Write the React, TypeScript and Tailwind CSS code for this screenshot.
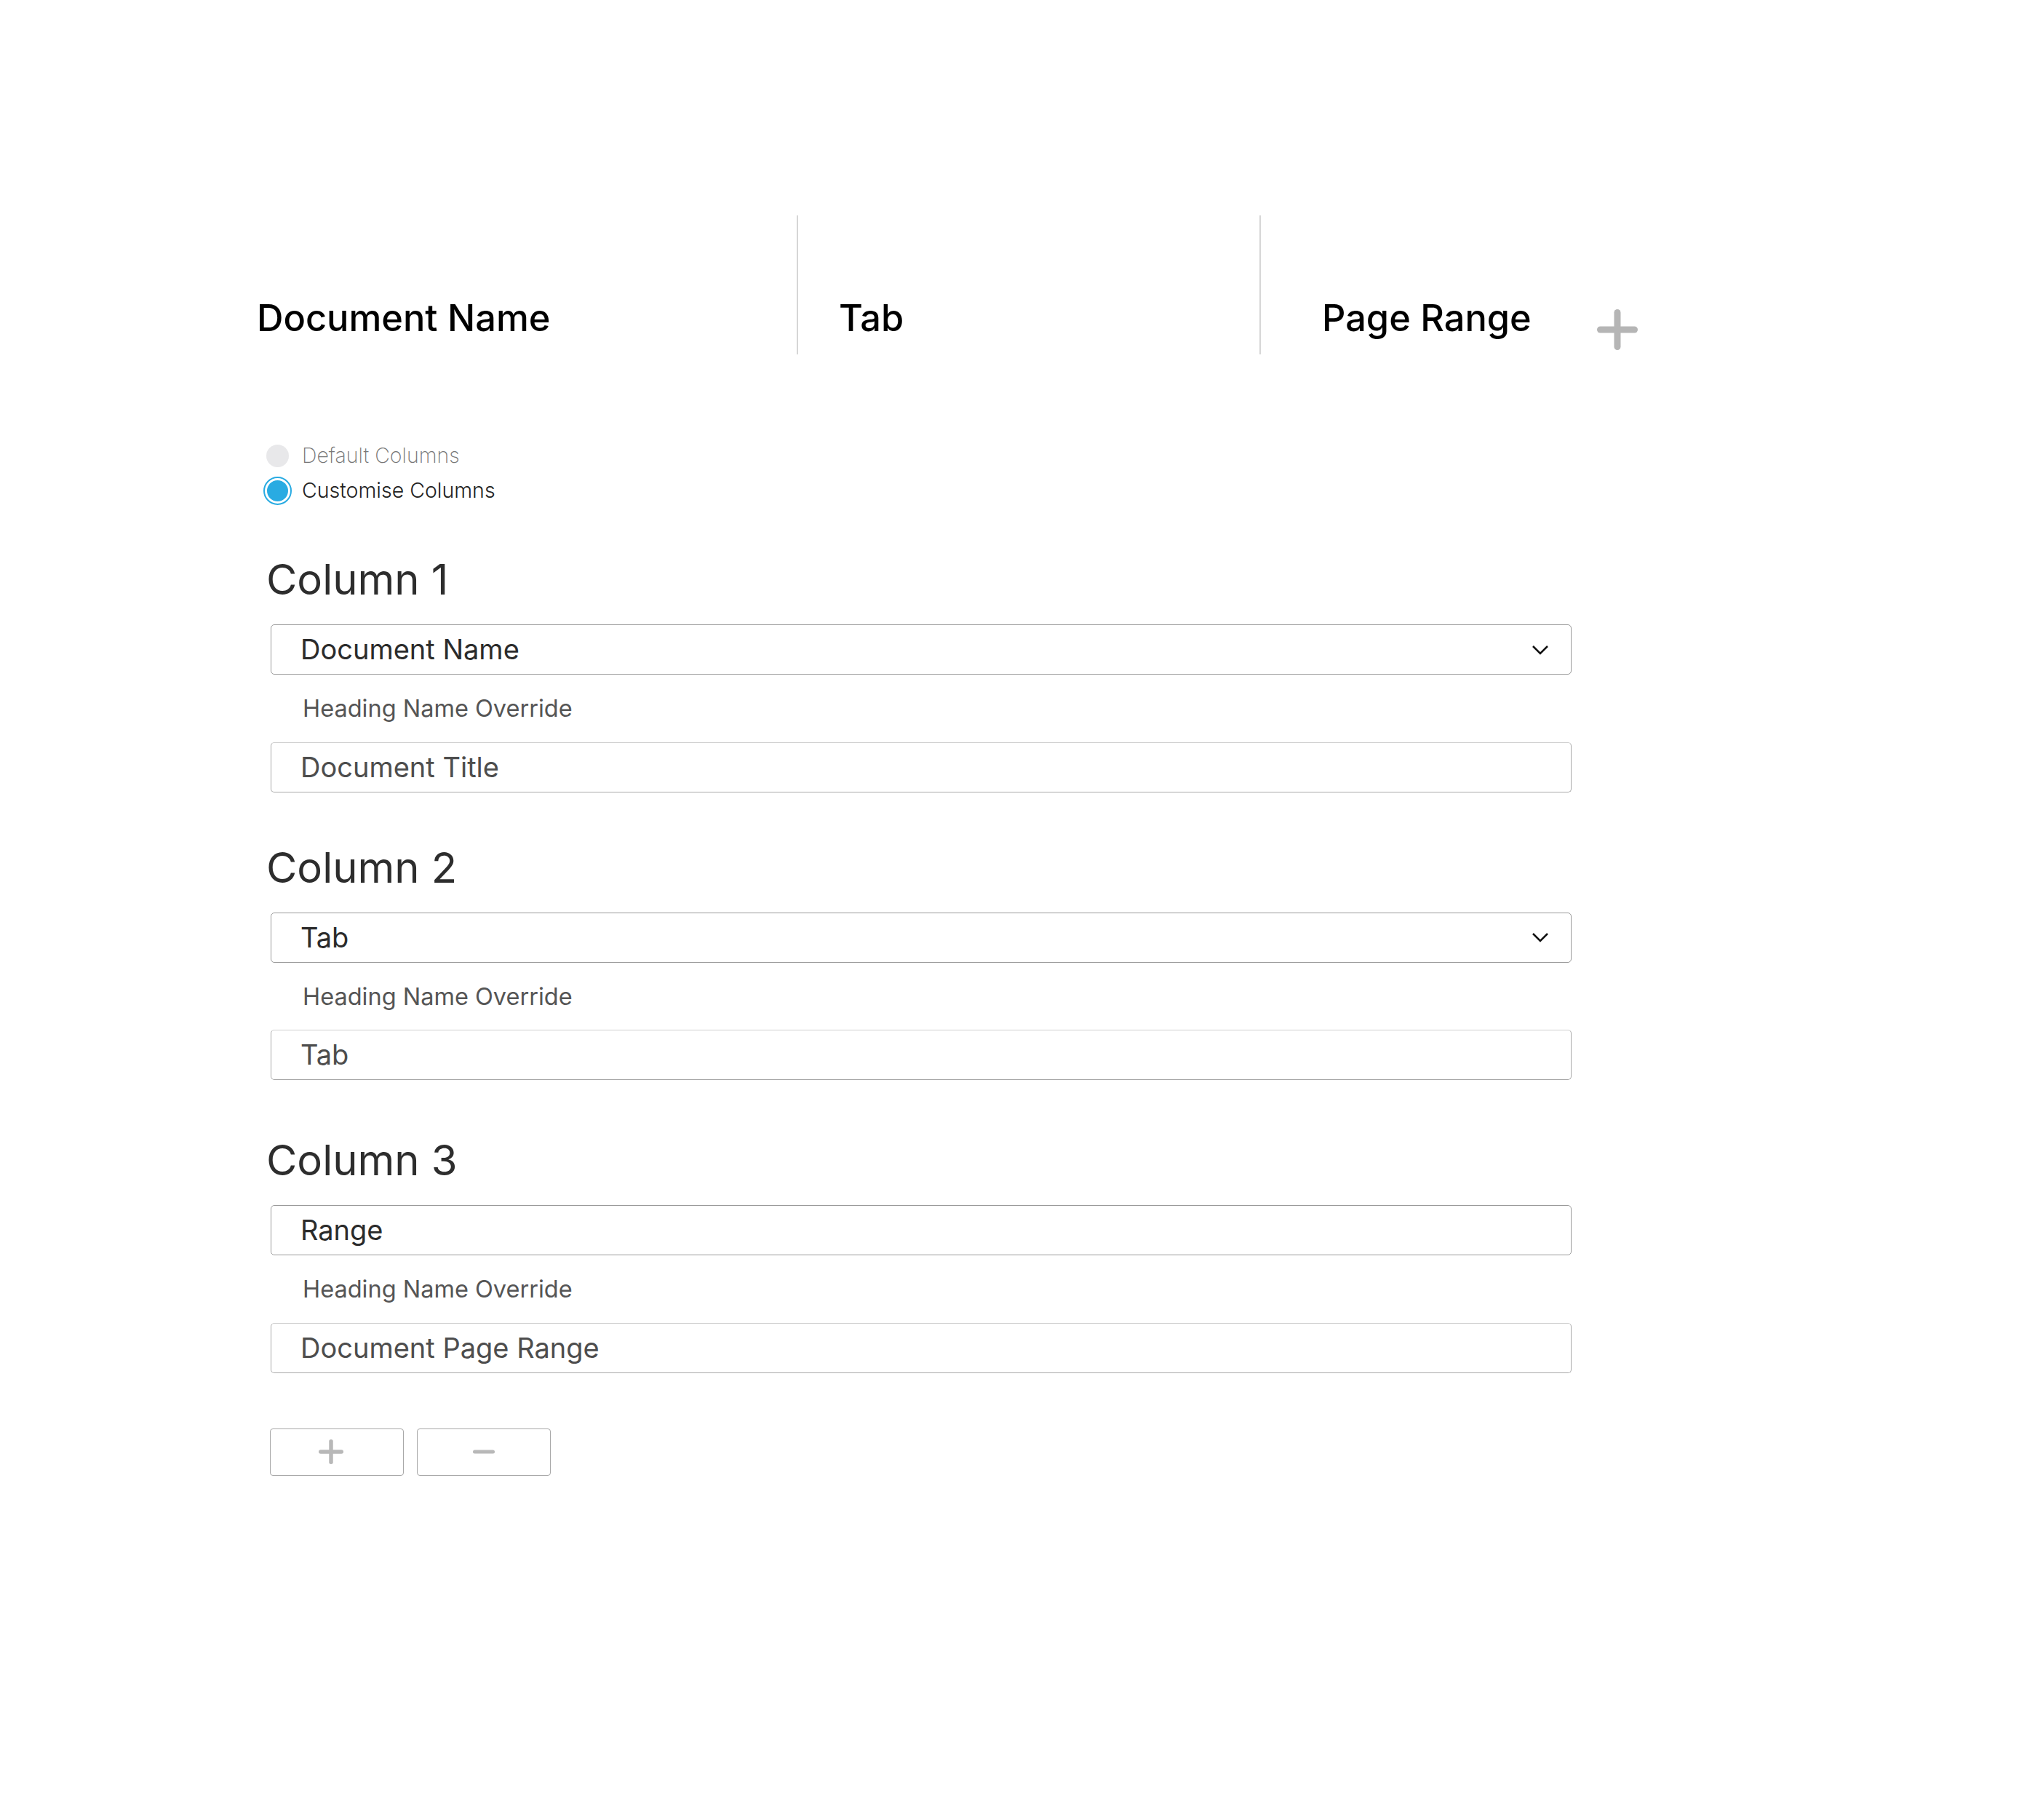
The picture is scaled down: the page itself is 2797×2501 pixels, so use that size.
import React from "react";

type ColumnProps = {
  title: string;
  value: string;
  override: string;
  select?: boolean;
  top: string;
};

function Chevron() {
  return (
    <svg width="24" height="14" viewBox="0 0 24 14" className="mr-[30px]">
      <polyline points="2,2 12,12 22,2" fill="none" stroke="#111" strokeWidth="2.5" />
    </svg>
  );
}

function Plus({ size, stroke, color }: { size: number; stroke: number; color: string }) {
  const h = stroke / 2;
  return (
    <svg width={size} height={size} viewBox={`0 0 ${size} ${size}`}>
      <line x1={h} y1={size / 2} x2={size - h} y2={size / 2} stroke={color} strokeWidth={stroke} strokeLinecap="round" />
      <line x1={size / 2} y1={h} x2={size / 2} y2={size - h} stroke={color} strokeWidth={stroke} strokeLinecap="round" />
    </svg>
  );
}

function ColumnSection({ title, value, override, select, top }: ColumnProps) {
  return (
    <div className={top}>
      <h2 className="ml-[13px] mb-[33px] text-[58px] leading-none font-normal text-[#2d2d2d]">{title}</h2>

      <div className="ml-[19px] w-[1788px] h-[69px] rounded-[5px] border border-[#9a9a9a] flex items-center justify-between pl-[40px] text-[38px] text-[#2b2b2b]">
        <span>{value}</span>
        {select && <Chevron />}
      </div>

      <p className="ml-[63px] mt-[31px] mb-[29px] text-[32.5px] leading-none text-[#555555]">Heading Name Override</p>

      <div className="ml-[19px] w-[1788px] h-[69px] rounded-[5px] border border-[#a9a9a9] border-t-[#cfcfcf] flex items-center pl-[40px] text-[38px] text-[#4d4d4d]">
        {override}
      </div>
    </div>
  );
}

export default function App() {
  return (
    <div className="min-h-screen bg-white font-['Inter',sans-serif]">
      <div className="pl-[353px] pt-[296px] pb-[400px]">
        {/* Table header preview */}
        <div className="flex h-[191px] text-[50.5px] leading-none font-medium text-black">
          <div className="w-[742px] pt-[116px]">Document Name</div>
          <div className="w-[2px] bg-[#d6d6d6]" />
          <div className="w-[634px] pl-[56px] pt-[116px]">Tab</div>
          <div className="w-[2px] bg-[#d6d6d6]" />
          <div className="flex items-start pl-[84px] pt-[116px]">
            <span>Page Range</span>
            <div className="ml-[90px] mt-[13px]">
              <Plus size={56} stroke={9} color="#b5b5b5" />
            </div>
          </div>
        </div>

        {/* Column mode */}
        <div className="mt-[115px] ml-[8px] flex flex-col">
          <label className="flex items-center h-[48px]">
            <span className="w-[40px] flex justify-center">
              <span className="w-[31px] h-[31px] rounded-full bg-[#e8e8ea]" />
            </span>
            <span className="ml-[14px] text-[28.5px] leading-none font-extralight text-[#777777]">Default Columns</span>
          </label>
          <label className="flex items-center h-[48px]">
            <span className="w-[40px] flex justify-center">
              <span className="w-[39px] h-[39px] rounded-full border-2 border-[#29abe2] p-[3px] bg-white">
                <span className="block w-full h-full rounded-full bg-[#29abe2]" />
              </span>
            </span>
            <span className="ml-[14px] text-[28.5px] leading-none font-light text-[#222222]">Customise Columns</span>
          </label>
        </div>

        <ColumnSection top="mt-[69px]" title="Column 1" value="Document Name" override="Document Title" select />
        <ColumnSection top="mt-[74px]" title="Column 2" value="Tab" override="Tab" select />
        <ColumnSection top="mt-[81px]" title="Column 3" value="Range" override="Document Page Range" />

        <div className="mt-[76px] ml-[18px] flex gap-[18px]">
          <button className="w-[184px] h-[65px] rounded-[4px] border border-[#a8a8a8] flex items-center justify-center pr-[16px]">
            <Plus size={34} stroke={5.5} color="#b8b8b8" />
          </button>
          <button className="w-[184px] h-[65px] rounded-[4px] border border-[#a8a8a8] flex items-center justify-center">
            <svg width="30" height="6" viewBox="0 0 30 6">
              <line x1="2.5" y1="3" x2="27.5" y2="3" stroke="#b8b8b8" strokeWidth="5" strokeLinecap="round" />
            </svg>
          </button>
        </div>
      </div>
    </div>
  );
}
